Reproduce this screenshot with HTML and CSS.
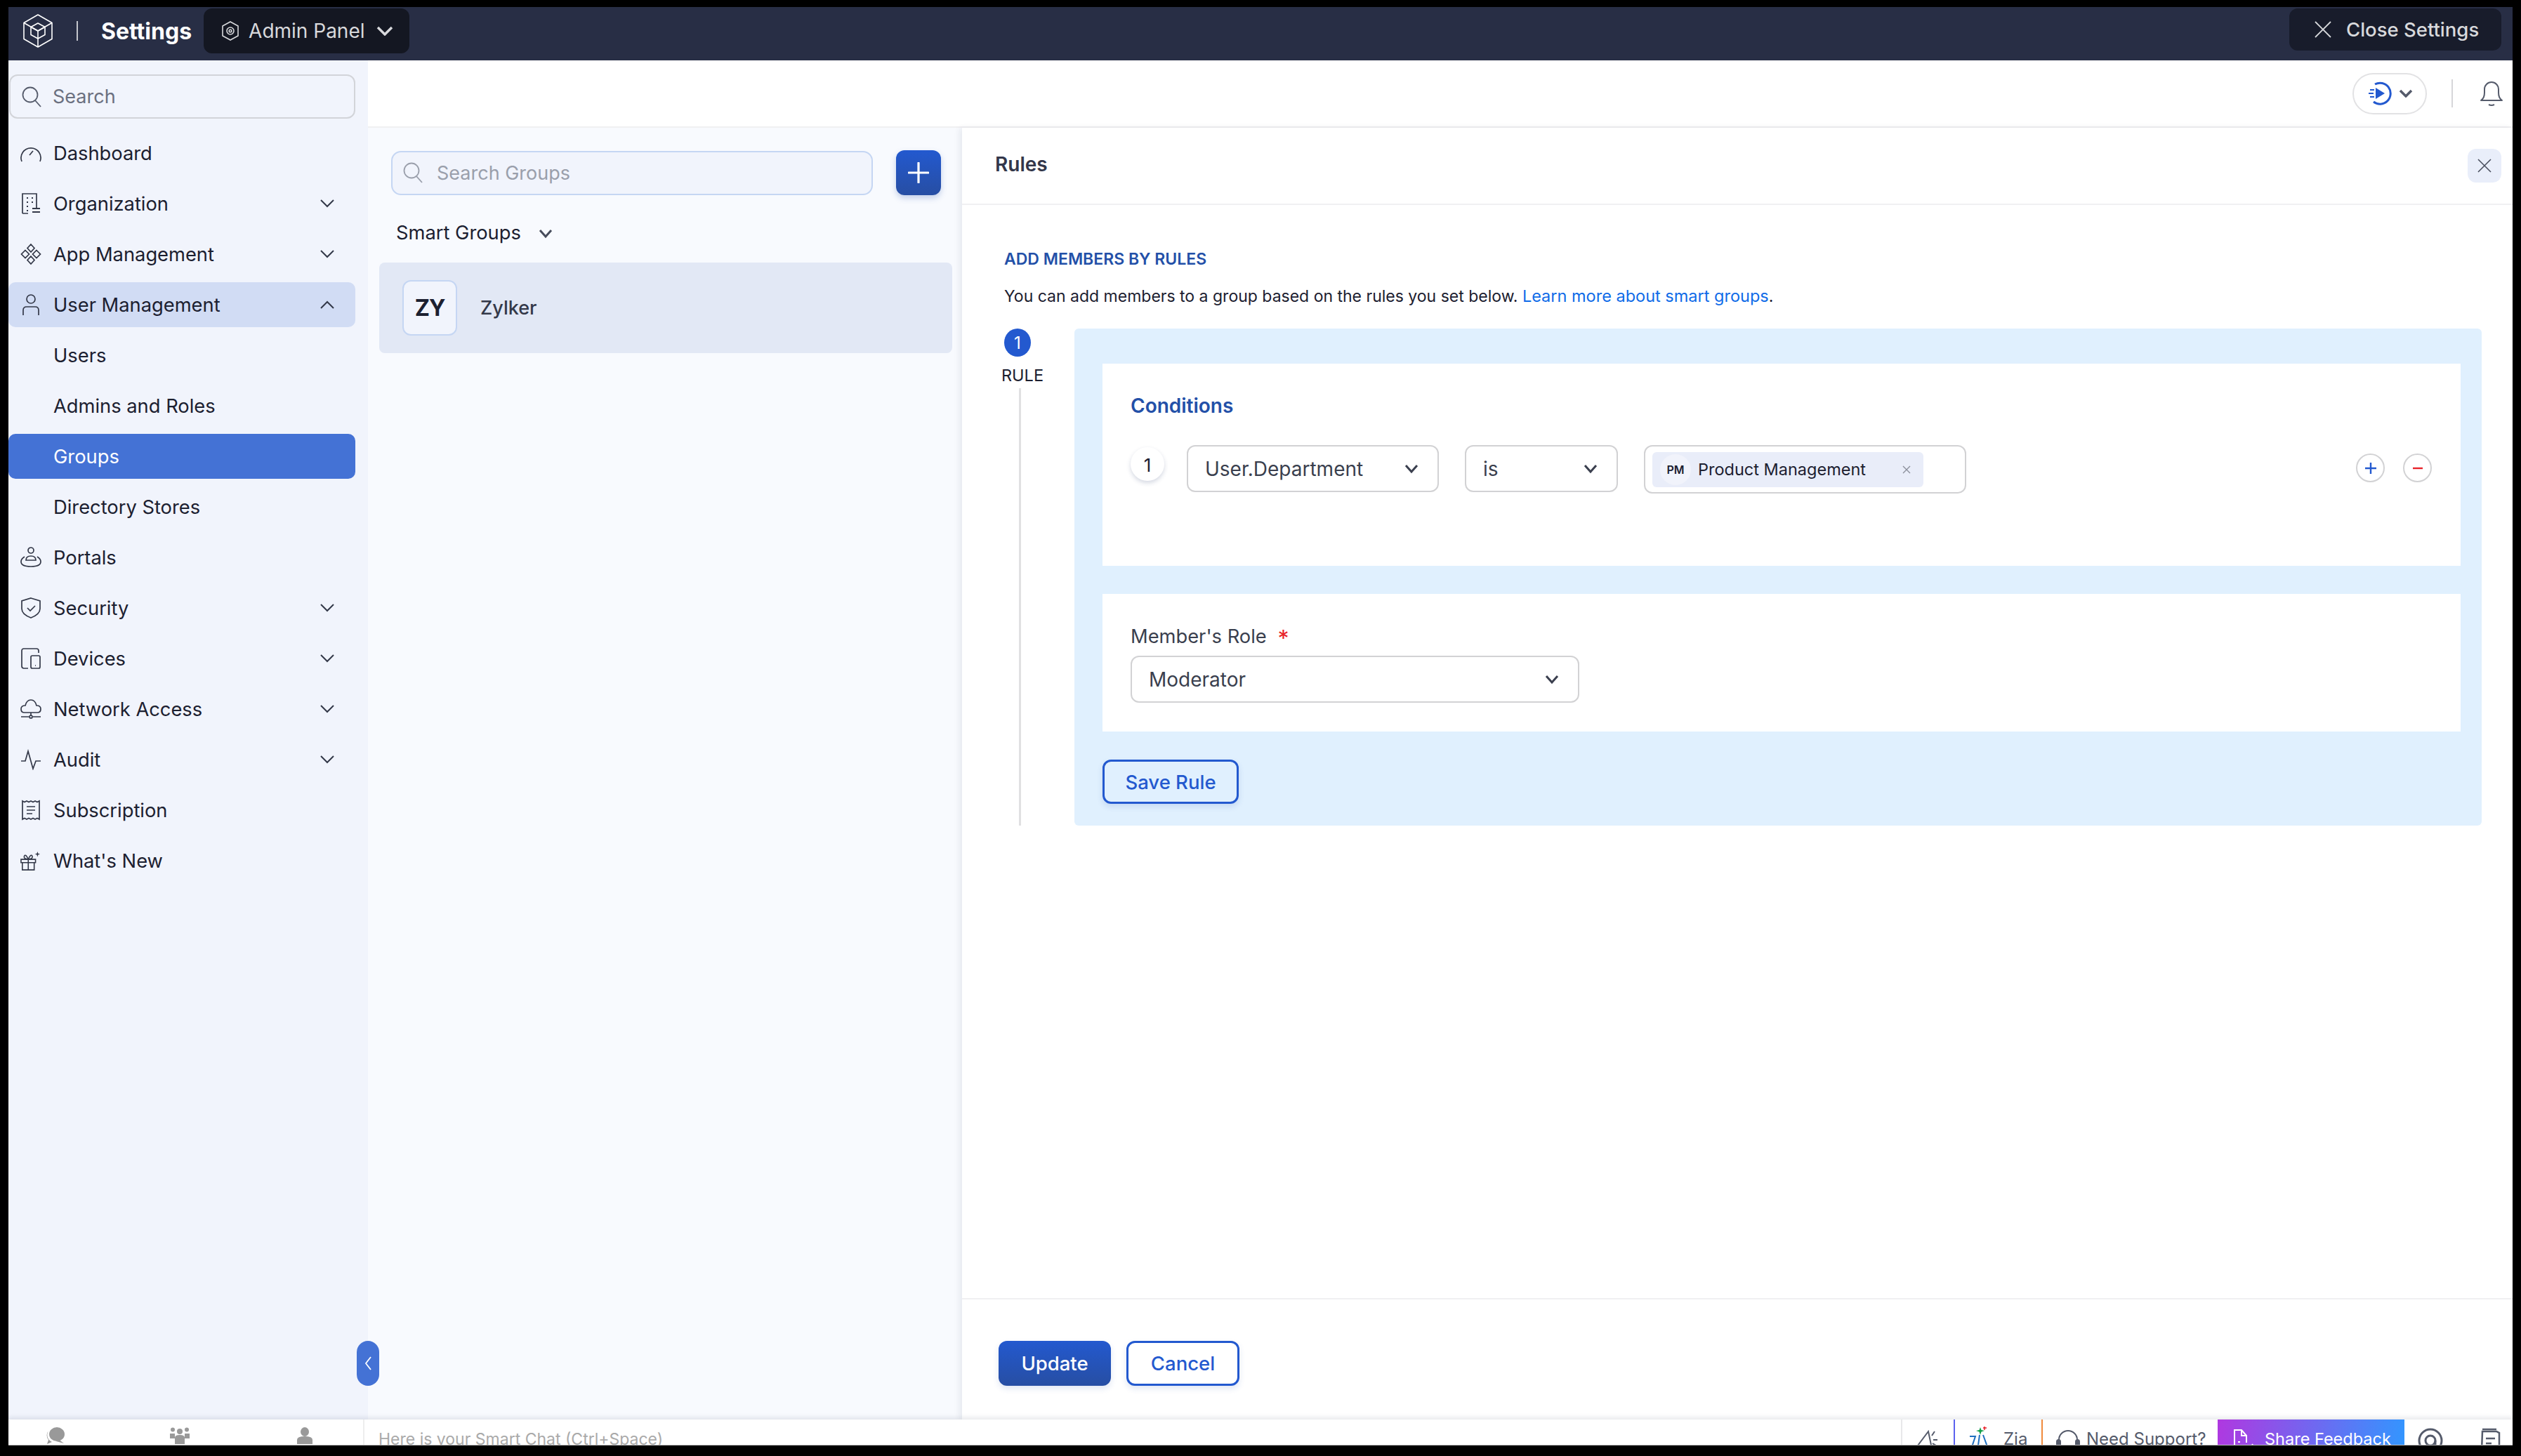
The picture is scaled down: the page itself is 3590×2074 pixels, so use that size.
FILE: index.html
```html
<!DOCTYPE html>
<html lang="en">
<head>
    <meta charset="UTF-8">
    <title>Settings - Groups</title>
    <link rel="stylesheet" href="styles.css">
</head>
<body>
<div class="frame">
    <header class="topbar">
        <svg class="logo" viewBox="0 0 42 48" fill="none" stroke="#fff" stroke-width="1.6" stroke-linejoin="round"><path d="M21 1 41 12.500v23L21 47 1 35.500v-23z"/><path d="M1 12.500 21 24l20-11.500M21 24v23"/><path d="M21 13l10 5.500v11L21 35l-10-5.500v-11z"/><path d="M11 18.500 21 24l10-5.500"/></svg>
        <span class="topbar-sep"></span>
        <span class="topbar-title">Settings</span>
        <div class="admin-btn">
            <svg class="ic-admin" viewBox="0 0 24 28" fill="none" stroke="#d8d9dc" stroke-width="1.600"><path d="M12 1 23 7v14l-11 6-11-6V7z"/><circle cx="12" cy="14" r="5"/><circle cx="12" cy="14" r="1.800"/></svg>
            <span>Admin Panel</span>
            <svg class="ic-admin-chev" viewBox="0 0 24 14" fill="none" stroke="#d8d9dc" stroke-width="3.500"><path d="M2 2l10 10L22 2"/></svg>
        </div>
        <div class="close-btn">
            <svg class="ic-close" viewBox="0 0 24 24" fill="none" stroke="#d8d9dc" stroke-width="1.800"><path d="M1 1l22 22M23 1 1 23"/></svg>
            <span>Close Settings</span>
        </div>
    </header>

    <div class="main">
        <aside class="sidebar">
            <div class="side-search">
                <svg class="ic-search" viewBox="0 0 28 30" fill="none" stroke="#555b6b" stroke-width="1.800"><circle cx="12" cy="12" r="10.500"/><path d="M19 20l8 9"/></svg>
                <span>Search</span>
            </div>
            <nav class="nav">
                <div class="nav-item">
                    <svg class="nav-icon" viewBox="0 0 30 30" fill="none" stroke="#333848" stroke-width="1.700"><path d="M2 27A14 14 0 1 1 28 27"/><path d="M13 18l5-6"/></svg>
                    <span>Dashboard</span>
                </div>
                <div class="nav-item">
                    <svg class="nav-icon" viewBox="0 0 30 30" fill="none" stroke="#333848" stroke-width="1.700"><path d="M3 29V1h20v20M3 29h8"/><path d="M9 7h2M16 7h2M9 13h2M16 13h2M9 19h2M9 25h2M17 22h11M17 27h11" stroke-width="2"/></svg>
                    <span>Organization</span>
                    <svg class="chev" viewBox="0 0 20 12" fill="none" stroke="#333848" stroke-width="2"><path d="M1 1l9 9 9-9"/></svg>
                </div>
                <div class="nav-item">
                    <svg class="nav-icon" viewBox="0 0 30 30" fill="none" stroke="#333848" stroke-width="1.700"><path d="M15 1l5 5.500-5 5.500-5-5.500zM7 9.500l5.500 5.500L7 20.500 1.500 15zM23 9.500l5.500 5.500-5.500 5.500-5.500-5.500zM15 18l5 5.500-5 5.500-5-5.500z"/></svg>
                    <span>App Management</span>
                    <svg class="chev" viewBox="0 0 20 12" fill="none" stroke="#333848" stroke-width="2"><path d="M1 1l9 9 9-9"/></svg>
                </div>
                <div class="nav-item nav-open">
                    <svg class="nav-icon" viewBox="0 0 30 30" fill="none" stroke="#333848" stroke-width="1.700"><circle cx="15" cy="7" r="6"/><path d="M4 30v-7q0-5 5-5h12q5 0 5 5v7"/></svg>
                    <span>User Management</span>
                    <svg class="chev" viewBox="0 0 20 12" fill="none" stroke="#333848" stroke-width="2"><path d="M1 11l9-9 9 9"/></svg>
                </div>
                <div class="nav-item nav-sub"><span>Users</span></div>
                <div class="nav-item nav-sub"><span>Admins and Roles</span></div>
                <div class="nav-item nav-sub nav-active"><span>Groups</span></div>
                <div class="nav-item nav-sub"><span>Directory Stores</span></div>
                <div class="nav-item">
                    <svg class="nav-icon" viewBox="0 0 30 30" fill="none" stroke="#333848" stroke-width="1.700"><circle cx="15" cy="5" r="4"/><path d="M8 19q0-6 7-6t7 6z"/><path d="M6 14q-5 3-5 7 0 7 14 7t14-7q0-4-5-7"/></svg>
                    <span>Portals</span>
                </div>
                <div class="nav-item">
                    <svg class="nav-icon" viewBox="0 0 30 30" fill="none" stroke="#333848" stroke-width="1.700"><path d="M15 1 28 5v11q0 8-13 13Q2 24 2 16V5z"/><path d="M10 15l4 4 7-7"/></svg>
                    <span>Security</span>
                    <svg class="chev" viewBox="0 0 20 12" fill="none" stroke="#333848" stroke-width="2"><path d="M1 1l9 9 9-9"/></svg>
                </div>
                <div class="nav-item">
                    <svg class="nav-icon" viewBox="0 0 30 30" fill="none" stroke="#333848" stroke-width="1.700"><path d="M11 29H5q-3 0-3-3V4q0-3 3-3h18q3 0 3 3v3"/><rect x="15" y="11" width="13" height="18" rx="2"/><path d="M21 25h1"/></svg>
                    <span>Devices</span>
                    <svg class="chev" viewBox="0 0 20 12" fill="none" stroke="#333848" stroke-width="2"><path d="M1 1l9 9 9-9"/></svg>
                </div>
                <div class="nav-item">
                    <svg class="nav-icon" viewBox="0 0 30 30" fill="none" stroke="#333848" stroke-width="1.700"><path d="M8 20H6q-5 0-5-5t6-5q2-8 8-8t8 8q6 0 6 5t-5 5z"/><path d="M15 20v5M1 26h11M18 26h11"/><circle cx="15" cy="26" r="2"/></svg>
                    <span>Network Access</span>
                    <svg class="chev" viewBox="0 0 20 12" fill="none" stroke="#333848" stroke-width="2"><path d="M1 1l9 9 9-9"/></svg>
                </div>
                <div class="nav-item">
                    <svg class="nav-icon" viewBox="0 0 30 30" fill="none" stroke="#333848" stroke-width="1.700"><path d="M1 17h6l4-14 7 25 4-11h7"/></svg>
                    <span>Audit</span>
                    <svg class="chev" viewBox="0 0 20 12" fill="none" stroke="#333848" stroke-width="2"><path d="M1 1l9 9 9-9"/></svg>
                </div>
                <div class="nav-item">
                    <svg class="nav-icon" viewBox="0 0 30 30" fill="none" stroke="#333848" stroke-width="1.700"><path d="M3 2l3 1.500L9 2l3 1.500L15 2l3 1.500L21 2l3 1.500L27 2v26l-3-1.500-3 1.500-3-1.500-3 1.500-3-1.500L9 28l-3-1.500L3 28z"/><path d="M9 10h12M9 15h12M9 20h8"/></svg>
                    <span>Subscription</span>
                </div>
                <div class="nav-item">
                    <svg class="nav-icon" viewBox="0 0 32 30" fill="none" stroke="#333848" stroke-width="1.700"><path d="M1 13h22v5H1zM3 18h18v11H3zM12 13v16M12 13q-8-1-6-5t6 5q8-1 6-5t-6 5z"/><path d="M26 1l1 3 3 1-3 1-1 3-1-3-3-1 3-1z" fill="#333848" stroke="none"/></svg>
                    <span>What's New</span>
                </div>
            </nav>
        </aside>

        <div class="content">
            <div class="content-top">
                <div class="play-pill">
                    <svg class="ic-play" viewBox="0 0 34 34" fill="none" stroke="#2359cf" stroke-width="3"><path d="M10 4A15 15 0 1 1 8 29"/><path d="M11 9l13 8-13 8z" fill="#2359cf" stroke="none"/><path d="M3 12h6M1 17h7M3 22h6" stroke-width="2"/></svg>
                    <svg class="ic-pill-chev" viewBox="0 0 20 12" fill="none" stroke="#555b6b" stroke-width="3.500"><path d="M2 2l8 8 8-8"/></svg>
                </div>
                <span class="top-sep"></span>
                <svg class="ic-bell" viewBox="0 0 34 38" fill="none" stroke="#555b6b" stroke-width="2"><path d="M2 29q5-3 5-11V13a10 10 0 0 1 20 0v5q0 8 5 11z" stroke-linejoin="round"/><path d="M13 35q4 2 8 0"/></svg>
            </div>

            <div class="workspace">
                <section class="groups">
                    <div class="groups-search-row">
                        <div class="groups-search">
                            <svg class="ic-search" viewBox="0 0 28 30" fill="none" stroke="#9a9fab" stroke-width="1.800"><circle cx="12" cy="12" r="10.500"/><path d="M19 20l8 9"/></svg>
                            <span>Search Groups</span>
                        </div>
                        <button class="add-btn">
                            <svg viewBox="0 0 28 28" fill="none" stroke="#fff" stroke-width="3" stroke-linecap="round"><path d="M14 1v26M1 14h26"/></svg>
                        </button>
                    </div>
                    <div class="groups-filter">
                        <span>Smart Groups</span>
                        <svg viewBox="0 0 20 14" fill="none" stroke="#474c5c" stroke-width="3"><path d="M2 2l8 9 8-9"/></svg>
                    </div>
                    <div class="group-row">
                        <div class="group-avatar">ZY</div>
                        <span>Zylker</span>
                    </div>
                </section>

                <section class="rules">
                    <div class="rules-head">
                        <span>Rules</span>
                        <div class="rules-close">
                            <svg viewBox="0 0 20 20" fill="none" stroke="#4a4f5e" stroke-width="1.600"><path d="M1 1l18 18M19 1 1 19"/></svg>
                        </div>
                    </div>
                    <div class="rules-body">
                        <h2>ADD MEMBERS BY RULES</h2>
                        <p>You can add members to a group based on the rules you set below. <a href="#">Learn more about smart groups</a>.</p>
                        <div class="rule">
                            <div class="rule-step">
                                <div class="step-num">1</div>
                                <div class="step-label">RULE</div>
                                <div class="step-line"></div>
                            </div>
                            <div class="rule-panel">
                                <div class="card card-conditions">
                                    <h3>Conditions</h3>
                                    <div class="cond-row">
                                        <div class="cond-num">1</div>
                                        <div class="select select-field">
                                            <span>User.Department</span>
                                            <svg viewBox="0 0 20 14" fill="none" stroke="#3a3f4e" stroke-width="3"><path d="M2 2l8 9 8-9"/></svg>
                                        </div>
                                        <div class="select select-op">
                                            <span>is</span>
                                            <svg viewBox="0 0 20 14" fill="none" stroke="#3a3f4e" stroke-width="3"><path d="M2 2l8 9 8-9"/></svg>
                                        </div>
                                        <div class="select select-multi">
                                            <div class="chip">
                                                <span class="chip-avatar">PM</span>
                                                <span class="chip-text">Product Management</span>
                                                <svg viewBox="0 0 12 12" fill="none" stroke="#8b8f9b" stroke-width="1.400"><path d="M1 1l10 10M11 1 1 11"/></svg>
                                            </div>
                                        </div>
                                        <div class="cond-actions">
                                            <div class="round-btn">
                                                <svg viewBox="0 0 18 18" fill="none" stroke="#2359cf" stroke-width="2.400"><path d="M9 1v16M1 9h16"/></svg>
                                            </div>
                                            <div class="round-btn">
                                                <svg viewBox="0 0 18 18" fill="none" stroke="#e8232a" stroke-width="2.400"><path d="M2 9h14"/></svg>
                                            </div>
                                        </div>
                                    </div>
                                </div>
                                <div class="card card-role">
                                    <label>Member's Role <span class="req">*</span></label>
                                    <div class="select select-role">
                                        <span>Moderator</span>
                                        <svg viewBox="0 0 20 14" fill="none" stroke="#3a3f4e" stroke-width="3"><path d="M2 2l8 9 8-9"/></svg>
                                    </div>
                                </div>
                                <button class="btn btn-outline btn-save">Save Rule</button>
                            </div>
                        </div>
                    </div>
                    <div class="rules-foot">
                        <button class="btn btn-primary">Update</button>
                        <button class="btn btn-outline btn-cancel">Cancel</button>
                    </div>
                </section>
            </div>
        </div>

        <div class="collapse-handle">
            <svg viewBox="0 0 10 20" fill="none" stroke="#fff" stroke-width="1.800"><path d="M9 1 2 10l7 9"/></svg>
        </div>
    </div>

    <footer class="bottombar">
        <div class="bar-tabs">
            <svg viewBox="0 0 28 24" fill="#999"><path d="M5 5a10 10 0 0 0 0 13l-2 6 7-3A11 11 0 0 1 5 5z"/><ellipse cx="17" cy="10" rx="11" ry="10"/><path d="M19 17l8 6-11-3z"/></svg>
            <svg viewBox="0 0 28 24" fill="#999"><circle cx="4" cy="3.500" r="3"/><circle cx="24" cy="3.500" r="3"/><circle cx="14" cy="6" r="4"/><path d="M0 9h7v7H0zM21 9h7v7h-7zM7 24V15q0-4 7-4t7 4v9z"/></svg>
            <svg viewBox="0 0 24 24" fill="#999"><ellipse cx="12" cy="6.500" rx="6" ry="6.500"/><path d="M1 24v-6q0-5 11-5t11 5v6z"/></svg>
        </div>
        <div class="bar-chat">Here is your Smart Chat (Ctrl+Space)</div>
        <div class="bar-right">
            <div class="bar-item bar-announce">
                <svg class="ic-announce" viewBox="0 0 32 38" fill="none" stroke="#555b6b" stroke-width="2"><path d="M2 24 17 4l5 24zM22 10l4-6M24 16h6M23 21l5 3M6 28l3 8"/></svg>
            </div>
            <div class="bar-item bar-zia">
                <svg class="ic-zia" viewBox="0 0 30 40" fill="none" stroke="#1f6fc0" stroke-width="2"><path d="M1 14h8L3 32M15 12l-3 22M20 12l8 22"/><path d="M16 1l1.500 4L22 6l-4.500 1.500L16 12l-1.500-4.500L10 6l4.500-1z" fill="#12a04a" stroke="none"/><path d="M22 0v5M20 2h5" stroke="#e8232a" stroke-width="1.500"/></svg>
                <span>Zia</span>
            </div>
            <div class="bar-item bar-support">
                <svg class="ic-head" viewBox="0 0 34 38" fill="none" stroke="#555b6b" stroke-width="2"><path d="M4 20V16a13 13 0 0 1 26 0v4"/><rect x="1" y="16" width="5" height="13" rx="2.500" fill="#555b6b"/><rect x="28" y="16" width="5" height="13" rx="2.500" fill="#555b6b"/></svg>
                <span>Need Support?</span>
            </div>
            <div class="bar-item bar-feedback">
                <svg class="ic-feedback" viewBox="0 0 30 38" fill="none" stroke="#fff" stroke-width="2"><path d="M16 36H2V2h10l7 8v10M12 2v8h7M7 19h3M7 26h8M28 22l-8 13"/></svg>
                <span>Share Feedback</span>
            </div>
            <div class="bar-icons">
                <svg class="ic-at" viewBox="0 0 36 38" fill="none" stroke="#555b6b" stroke-width="3"><circle cx="18" cy="19" r="16"/><circle cx="18" cy="19" r="7"/><path d="M25 19v12"/></svg>
                <svg class="ic-notes" viewBox="0 0 30 38" fill="none" stroke="#555b6b" stroke-width="2.500"><path d="M4 6h20l4 2v26H3z"/><path d="M4 3h20M9 16h13M9 23h8"/></svg>
            </div>
        </div>
    </footer>
</div>
</body>
</html>
```

FILE: styles.css
```css
* {
    box-sizing: border-box;
}

html, body {
    margin: 0;
    height: 100%;
}

body {
    background: #000;
    font-family: Inter, "Noto Sans", sans-serif;
    color: #1c2030;
    padding: 10px 12px 15px;
    overflow: hidden;
}

svg {
    display: block;
    flex-shrink: 0;
}

.frame {
    height: 100%;
    display: flex;
    flex-direction: column;
    overflow: hidden;
    background: #fff;
}

/* top bar */
.topbar {
    height: 76px;
    background: #282e45;
    display: flex;
    align-items: center;
    padding: 0 16px 8px 21px;
    flex-shrink: 0;
}

.logo {
    width: 42px;
    height: 48px;
}

.topbar-sep {
    width: 2px;
    height: 28px;
    background: #c4c6cc;
    margin-left: 34px;
}

.topbar-title {
    margin-left: 33px;
    font-size: 32px;
    font-weight: 700;
    color: #fff;
}

.admin-btn {
    margin-left: 17px;
    width: 293px;
    height: 64px;
    background: #141722;
    border-radius: 12px;
    display: flex;
    align-items: center;
    padding-left: 26px;
    color: #d8d9dc;
    font-size: 28px;
}

.ic-admin {
    width: 24px;
    height: 28px;
    margin-right: 14px;
}

.ic-admin-chev {
    width: 24px;
    height: 14px;
    margin-left: 16px;
}

.close-btn {
    margin-left: auto;
    width: 302px;
    height: 60px;
    margin-top: -4px;
    background: #181c2b;
    border-radius: 12px;
    display: flex;
    align-items: center;
    padding-left: 36px;
    color: #d8d9dc;
    font-size: 27.5px;
    font-weight: 500;
}

.ic-close {
    width: 24px;
    height: 24px;
    margin-right: 21px;
}

/* layout */
.main {
    flex: 1;
    display: flex;
    position: relative;
    min-height: 0;
}

.sidebar {
    width: 512px;
    background: #f1f4fc;
    padding: 20px 18px 0 1px;
    flex-shrink: 0;
}

.side-search {
    height: 63px;
    border: 2px solid #d2d4d9;
    border-radius: 12px;
    display: flex;
    align-items: center;
    padding-left: 16px;
    color: #6b7080;
    font-size: 27px;
}

.ic-search {
    width: 28px;
    height: 30px;
    margin-right: 16px;
}

.nav {
    margin-top: 17px;
    margin-left: -1px;
    display: flex;
    flex-direction: column;
    gap: 8px;
}

.nav-item {
    height: 64px;
    display: flex;
    align-items: center;
    border-radius: 10px;
    padding-left: 17px;
    font-size: 27.3px;
    position: relative;
}

.nav-icon {
    width: 30px;
    height: 30px;
    margin-right: 17px;
}

.chev {
    width: 20px;
    height: 12px;
    margin-left: auto;
    margin-right: 30px;
}

.nav-open {
    background: #d1dcf4;
}

.nav-sub {
    padding-left: 64px;
}

.nav-active {
    background: #4472d5;
    color: #fff;
}

.content {
    flex: 1;
    display: flex;
    flex-direction: column;
    min-width: 0;
}

.content-top {
    height: 96px;
    border-bottom: 2px solid #f0f0f2;
    display: flex;
    align-items: center;
    justify-content: flex-end;
    padding-right: 13px;
    flex-shrink: 0;
}

.play-pill {
    width: 106px;
    height: 59px;
    border: 2px solid #e2e2e4;
    border-radius: 30px;
    display: flex;
    align-items: center;
    padding-left: 20px;
    gap: 10px;
}

.ic-play {
    width: 34px;
    height: 34px;
}

.ic-pill-chev {
    width: 20px;
    height: 12px;
}

.top-sep {
    width: 2px;
    height: 40px;
    background: #d6d6d9;
    margin-left: 35px;
    margin-right: 38px;
}

.ic-bell {
    width: 34px;
    height: 38px;
}

.workspace {
    flex: 1;
    display: flex;
    min-height: 0;
}

/* groups list */
.groups {
    width: 846px;
    background: #f8fafe;
    flex-shrink: 0;
    padding: 32px 14px 0 16px;
}

.groups-search-row {
    display: flex;
    align-items: center;
    padding-left: 17px;
    padding-right: 16px;
    gap: 33px;
}

.groups-search {
    width: 686px;
    height: 63px;
    background: #f1f4fc;
    border: 2px solid #c5d6f3;
    border-radius: 14px;
    display: flex;
    align-items: center;
    padding-left: 15px;
    color: #9a9fab;
    font-size: 27px;
}

.groups-search .ic-search {
    margin-right: 20px;
}

.add-btn {
    width: 64px;
    height: 64px;
    border: 0;
    border-radius: 12px;
    padding: 0;
    background: linear-gradient(#2359cf, #274ea3);
    box-shadow: 0 4px 8px rgba(35, 80, 170, .25);
    display: flex;
    align-items: center;
    justify-content: center;
}

.add-btn svg {
    width: 30px;
    height: 30px;
}

.groups-filter {
    margin-top: 36px;
    padding-left: 24px;
    display: flex;
    align-items: center;
    font-size: 27.3px;
    height: 34px;
}

.groups-filter svg {
    width: 20px;
    height: 14px;
    margin-left: 25px;
    margin-top: 4px;
}

.group-row {
    margin-top: 26px;
    height: 129px;
    background: #e2e8f5;
    border-radius: 8px;
    display: flex;
    align-items: center;
    padding-left: 33px;
    font-size: 27px;
    font-weight: 500;
    color: #343949;
}

.group-avatar {
    width: 78px;
    height: 79px;
    background: #f1f4fc;
    border: 2px solid #c5d6f3;
    border-radius: 12px;
    display: flex;
    align-items: center;
    justify-content: center;
    font-weight: 700;
    font-size: 32px;
    letter-spacing: -1px;
    color: #1c2030;
    margin-right: 33px;
}

/* rules panel */
.rules {
    flex: 1;
    display: flex;
    flex-direction: column;
    min-width: 0;
    background: #fff;
    box-shadow: -4px 0 8px rgba(20, 30, 60, .07);
    position: relative;
}

.rules-head {
    height: 110px;
    border-bottom: 2px solid #f0f0f2;
    display: flex;
    align-items: center;
    justify-content: space-between;
    padding: 0 16px 0 47px;
    font-size: 28px;
    font-weight: 600;
    color: #33374a;
    flex-shrink: 0;
}

.rules-head span {
    margin-top: -5px;
}

.rules-close {
    width: 48px;
    height: 48px;
    background: #e9eefa;
    border-radius: 12px;
    display: flex;
    align-items: center;
    justify-content: center;
}

.rules-close svg {
    width: 20px;
    height: 20px;
}

.rules-body {
    flex: 1;
    padding: 62px 44px 0 60px;
}

.rules-body h2 {
    margin: 0;
    font-size: 23px;
    line-height: 30px;
    font-weight: 600;
    color: #2350a8;
}

.rules-body p {
    margin: 23px 0 31px;
    font-size: 23px;
    line-height: 30px;
    color: #1c2030;
}

.rules-body a {
    color: #0f6be8;
    font-size: 23.5px;
    text-decoration: none;
}

.rule {
    display: flex;
    margin-left: -4px;
    height: 708px;
}

.rule-step {
    width: 104px;
    flex-shrink: 0;
    display: flex;
    flex-direction: column;
}

.step-num {
    width: 38px;
    height: 40px;
    margin-left: 4px;
    border-radius: 50%;
    background: #2359cf;
    color: #fff;
    font-size: 24px;
    display: flex;
    align-items: center;
    justify-content: center;
}

.step-label {
    margin-top: 12px;
    font-size: 23.5px;
    line-height: 30px;
}

.step-line {
    flex: 1;
    width: 3px;
    margin-left: 25px;
    margin-top: 3px;
    background: #e0e0e2;
}

.rule-panel {
    flex: 1;
    background: #e0f0fe;
    border-radius: 6px;
    padding: 50px 30px 0 40px;
}

.card {
    background: #fff;
}

.card-conditions {
    height: 288px;
    padding: 45px 41px 0 40px;
}

.card-conditions h3 {
    margin: 0 0 41px;
    font-size: 28px;
    line-height: 30px;
    font-weight: 600;
    color: #2350a8;
}

.cond-row {
    display: flex;
    align-items: flex-start;
}

.cond-num {
    width: 48px;
    height: 48px;
    margin-top: 3px;
    margin-right: 32px;
    padding-top: 2px;
    border-radius: 50%;
    background: #fff;
    box-shadow: 0 3px 6px rgba(40, 60, 110, .2);
    display: flex;
    align-items: center;
    justify-content: center;
    font-size: 26px;
}

.select {
    height: 67px;
    border: 2px solid #d2d2d4;
    border-radius: 12px;
    display: flex;
    align-items: center;
    justify-content: space-between;
    padding: 0 27px 0 24px;
    font-size: 28px;
    color: #3a3f4e;
    background: #fff;
}

.select svg {
    width: 20px;
    height: 14px;
}

.select-field {
    width: 359px;
    margin-right: 37px;
}

.select-op {
    width: 218px;
    margin-right: 37px;
}

.select-multi {
    width: 459px;
    height: 69px;
    padding: 0 0 0 10px;
    justify-content: flex-start;
}

.chip {
    width: 386px;
    height: 50px;
    background: #e9edf9;
    border-radius: 6px;
    display: flex;
    align-items: center;
    padding-left: 11px;
    color: #1c2030;
}

.chip-avatar {
    width: 44px;
    height: 44px;
    border-radius: 50%;
    background: #f1f3fb;
    font-size: 16px;
    font-weight: 600;
    display: flex;
    align-items: center;
    justify-content: center;
    margin-right: 10px;
}

.chip-text {
    font-size: 23.5px;
}

.chip svg {
    width: 12px;
    height: 12px;
    margin-left: auto;
    margin-right: 18px;
}

.cond-actions {
    margin-left: auto;
    margin-top: 12px;
    display: flex;
    gap: 26px;
}

.round-btn {
    width: 41px;
    height: 41px;
    border: 2px solid #d2d2d4;
    border-radius: 50%;
    display: flex;
    align-items: center;
    justify-content: center;
}

.round-btn svg {
    width: 18px;
    height: 18px;
}

.card-role {
    margin-top: 40px;
    height: 196px;
    padding: 46px 40px 0;
}

.card-role label {
    display: block;
    font-size: 27.3px;
    line-height: 30px;
    color: #3a3f4e;
    margin-bottom: 12px;
}

.req {
    color: #e8232a;
    margin-left: 8px;
    font-size: 32px;
    line-height: 20px;
    position: relative;
    top: 5px;
}

.select-role {
    width: 639px;
}

.btn {
    height: 64px;
    border-radius: 12px;
    font-family: inherit;
    font-size: 27.5px;
    font-weight: 500;
    padding: 0;
    box-shadow: 0 4px 8px rgba(35, 80, 170, .14);
}

.btn-outline {
    background: transparent;
    border: 3px solid #2359cf;
    color: #2359cf;
}

.btn-primary {
    width: 160px;
    border: 0;
    color: #fff;
    background: linear-gradient(#2359cf, #274ea3);
}

.btn-save {
    display: block;
    margin-top: 40px;
    width: 194px;
    height: 63px;
}

.btn-cancel {
    width: 161px;
    background: #fff;
}

.rules-foot {
    height: 173px;
    border-top: 2px solid #f0f0f2;
    padding: 59px 0 0 52px;
    display: flex;
    align-items: flex-start;
    gap: 22px;
    flex-shrink: 0;
}

.collapse-handle {
    position: absolute;
    left: 496px;
    top: 1824px;
    width: 32px;
    height: 64px;
    border-radius: 16px;
    background: #4472d5;
    display: flex;
    align-items: center;
    justify-content: center;
    z-index: 2;
}

.collapse-handle svg {
    width: 10px;
    height: 20px;
}

/* bottom bar, cut off by the window edge */
.bottombar {
    height: 37px;
    flex-shrink: 0;
    display: flex;
    background: #fff;
    box-shadow: 0 -3px 6px rgba(20, 30, 60, .1);
    position: relative;
    overflow: hidden;
    border-bottom: 1px solid #bbb;
}

.bar-tabs {
    width: 507px;
    border-right: 2px solid #eee;
    display: flex;
    padding: 11px 69px 0 52px;
    justify-content: space-between;
}

.bar-tabs svg {
    width: 28px;
    height: 24px;
}

.bar-chat {
    padding: 13px 0 0 20px;
    font-size: 23px;
    line-height: 30px;
    color: #aaa;
    white-space: nowrap;
}

.bar-right {
    margin-left: auto;
    display: flex;
    height: 100%;
    font-size: 24px;
    color: #555b6b;
}

.bar-item {
    display: flex;
    align-items: flex-start;
    padding-top: 13px;
    white-space: nowrap;
}

.bar-announce {
    width: 75px;
    border-left: 2px solid #e8e8ea;
    padding-left: 20px;
}

.ic-announce {
    width: 32px;
    height: 38px;
}

.bar-zia {
    width: 125px;
    border-left: 2px solid #5b62ee;
    padding-left: 20px;
    gap: 19px;
}

.ic-zia {
    width: 30px;
    height: 40px;
    margin-top: -3px;
}

.bar-support {
    width: 251px;
    border-left: 2px solid #f08a3c;
    padding-left: 19px;
    gap: 9px;
}

.ic-head {
    width: 34px;
    height: 38px;
}

.bar-feedback {
    width: 266px;
    padding-left: 22px;
    gap: 15px;
    color: #fff;
    font-size: 23.5px;
    background: linear-gradient(100deg, #b038e0, #3296ff);
}

.ic-feedback {
    width: 30px;
    height: 38px;
}

.bar-icons {
    width: 154px;
    display: flex;
    padding: 11px 18px 0 19px;
    gap: 52px;
}

.ic-at {
    width: 36px;
    height: 38px;
}

.ic-notes {
    width: 30px;
    height: 38px;
}
```
